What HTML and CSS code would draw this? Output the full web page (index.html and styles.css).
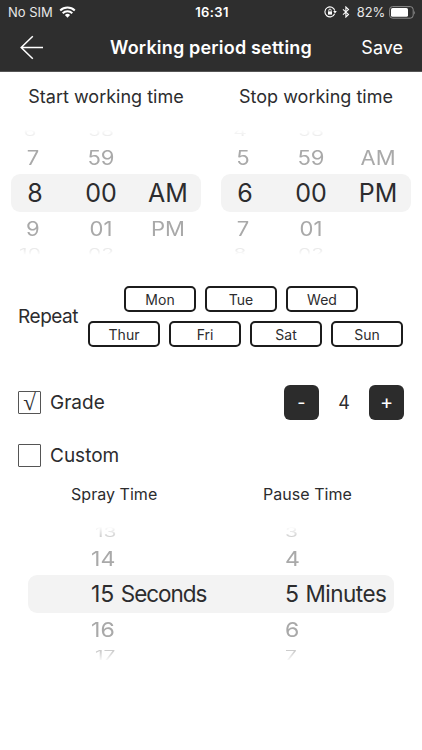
FILE: index.html
```html
<!DOCTYPE html>
<html lang="en">
<head>
<meta charset="utf-8">
<title>Working period setting</title>
<link rel="stylesheet" href="styles.css">
</head>
<body>
<header class="top">
  <div class="status">
    <div class="carrier">
      <span>No SIM</span>
      <svg class="wifi" width="17" height="12" viewBox="0 0 17 12" fill="none" stroke="#fff" stroke-width="2"><path d="M1.2 4.5a10.3 10.3 0 0 1 14.6 0M3.7 7.2a6.8 6.8 0 0 1 9.6 0"/><path d="M5.9 9.1a3.7 3.7 0 0 1 5.2 0L8.5 11.8z" fill="#fff" stroke="none"/></svg>
    </div>
    <div class="clock">16:31</div>
    <div class="indicators">
      <svg class="lock" width="13" height="12" viewBox="0 0 13 12" fill="none" stroke="#fff"><path d="M10.6 7.7A5 5 0 1 1 10.8 4.7" stroke-width="1.1"/><path d="M9.2 5h3.6L11 7.5z" fill="#fff" stroke="none"/><path d="M4 5.4h4v3.2H4z" fill="#fff" stroke="none"/><path d="M4.8 5.5V4.3a1.2 1.2 0 0 1 2.4 0v1.2" stroke-width=".9"/></svg>
      <svg class="bt" width="8" height="12" viewBox="0 0 8 12" fill="none" stroke="#fff" stroke-width="1.1"><path d="M1 3.3 6.5 8.4 3.9 11V1l2.6 2.6L1 8.7"/></svg>
      <span class="percent">82%</span>
      <svg class="battery" width="27" height="13" viewBox="0 0 27 13"><rect x=".6" y=".6" width="23.6" height="11.6" rx="3" fill="none" stroke="#8c8c8c" stroke-width="1"/><rect x="2" y="2" width="17" height="8.8" rx="1.6" fill="#fff"/><path d="M25.2 4.4q1.5 2 0 4z" fill="#8c8c8c"/></svg>
    </div>
  </div>
  <nav class="nav">
    <svg class="back" width="24" height="26" viewBox="0 0 24 26" fill="none" stroke="#fff" stroke-width="1.5"><path d="M24 12.5H2M13.8 1.2 2.2 12.5 13.8 23.8"/></svg>
    <h1>Working period setting</h1>
    <span class="save">Save</span>
  </nav>
</header>
<main>
  <section class="times">
    <div class="time">
      <h2 class="start">Start working time</h2>
      <div class="wheel">
        <div class="edge first"><span>6</span><span>58</span><span></span></div>
        <div class="near"><span>7</span><span>59</span><span></span></div>
        <div class="chosen"><span>8</span><span>00</span><span>AM</span></div>
        <div class="near"><span>9</span><span>01</span><span>PM</span></div>
        <div class="edge last"><span>10</span><span>02</span><span></span></div>
      </div>
    </div>
    <div class="time">
      <h2 class="stop">Stop working time</h2>
      <div class="wheel">
        <div class="edge first"><span>4</span><span>58</span><span></span></div>
        <div class="near"><span>5</span><span>59</span><span>AM</span></div>
        <div class="chosen"><span>6</span><span>00</span><span>PM</span></div>
        <div class="near"><span>7</span><span>01</span><span></span></div>
        <div class="edge last"><span>8</span><span>02</span><span></span></div>
      </div>
    </div>
  </section>
  <section class="repeat">
    <span class="label">Repeat</span>
    <div class="days">
      <div class="week upper"><button>Mon</button><button>Tue</button><button>Wed</button></div>
      <div class="week"><button>Thur</button><button>Fri</button><button>Sat</button><button>Sun</button></div>
    </div>
  </section>
  <section class="option grade">
    <span class="box">√</span><span class="label">Grade</span>
    <div class="stepper"><button>-</button><span>4</span><button class="plus">+</button></div>
  </section>
  <section class="option custom"><span class="box"></span><span class="label">Custom</span></section>
  <section class="durations">
    <div class="heads"><h3 class="spray">Spray Time</h3><h3 class="pause">Pause Time</h3></div>
    <div class="wheel wide">
      <div class="edge first"><span>13</span><span>3</span></div>
      <div class="near"><span>14</span><span>4</span></div>
      <div class="chosen"><span>15 <b class="sec">Seconds</b></span><span>5 <b class="min">Minutes</b></span></div>
      <div class="near"><span>16</span><span>6</span></div>
      <div class="edge last"><span>17</span><span>7</span></div>
    </div>
  </section>
</main>
</body>
</html>
```
FILE: styles.css
```css
* { box-sizing: border-box; }
body { margin: 0; width: 422px; height: 750px; overflow: hidden; background: #fff; color: #2c2c2e; font-family: Inter, "Liberation Sans", sans-serif; }
h1, h2, h3 { margin: 0; font-weight: 400; }
button { font: inherit; color: inherit; padding: 0; }
svg { display: block; flex: none; }
span, h1, h2, h3 { white-space: nowrap; }

.top { height: 72px; background: #2e2e2e; color: #fff; border-bottom: 1px solid #555; }
.status { height: 24px; display: grid; grid-template-columns: 1fr auto 1fr; align-items: center; padding: 0 6px 0 8px; font-size: 13px; }
.carrier, .indicators { display: flex; align-items: center; color: #e8e8e8; }
.carrier { gap: 6px; }
.clock { font-weight: 600; letter-spacing: .4px; }
.indicators { justify-content: flex-end; }
.bt { margin: 0 7px 0 5px; }
.percent { margin-right: 4px; letter-spacing: -.2px; }
.nav { height: 47px; display: grid; grid-template-columns: 90px 1fr 90px; align-items: center; padding: 0 19px; }
.nav h1 { font-size: 18px; font-weight: 600; letter-spacing: .18px; text-align: center; }
.save { text-align: right; font-size: 18px; }

.times { display: flex; justify-content: space-between; padding: 0 11px; }
.time { width: 190px; }
.times h2 { height: 50px; line-height: 49px; font-size: 18px; text-align: center; }
.wheel { margin-top: 2px; }
.wheel > div { display: grid; grid-template-columns: 48px 84px 50px; text-align: center; }
.wheel .edge { height: 16px; font-size: 21px; line-height: 16px; }
.edge span { color: #aaa; transform: scaleY(.6); }
.times .edge { opacity: .25; }
.times .edge span:first-child { padding-right: 10px; }
.times .near span:first-child { padding-right: 4px; }
.times .edge.first { -webkit-mask-image: linear-gradient(transparent 35%, #000 80%); }
.times .edge.last { -webkit-mask-image: linear-gradient(#000 20%, transparent 55%); }
.near { height: 34px; line-height: 35px; font-size: 21px; color: #a9a9a9; }
.near span { transform: scale(1.05, .93); }
.chosen { height: 38px; line-height: 38px; font-size: 25px; background: #f3f3f3; border-radius: 9px; }
.near:nth-child(2) { line-height: 36px; }
.near:nth-child(4) { line-height: 33px; }

.repeat { display: flex; align-items: center; height: 61px; margin-top: 24px; padding: 0 18px; }
.label { font-size: 19px; }
.repeat .label { width: 70px; letter-spacing: -.45px; }
.days { display: flex; flex-direction: column; gap: 9px; }
.week { display: flex; gap: 9px; }
.upper { padding-left: 36px; }
.week button { width: 72px; height: 26px; border: 2px solid #1c1c1c; border-radius: 5px; background: #fff; font-size: 14px; }

.option { display: flex; align-items: center; padding: 0 18px; height: 36px; }
.grade { margin-top: 37px; }
.custom { margin-top: 17px; }
.box { width: 23px; height: 23px; border: 1px solid #555; border-radius: 1px; font: 23px/22px "Liberation Serif", serif; text-align: center; margin-right: 9px; }
.stepper { display: flex; align-items: center; margin-left: auto; font-size: 18px; }
.stepper button { width: 35px; height: 35px; border: 0; border-radius: 6px; background: #2c2c2c; color: #fff; }
.stepper .plus { font-size: 20px; }
.stepper span { width: 50px; text-align: center; }

.heads { display: flex; height: 41px; line-height: 42px; padding-left: 71px; }
.heads h3 { font-size: 16px; letter-spacing: .04px; }
.spray { width: 192px; }
.wide { margin: 11px 28px 0; }
.wide > div { grid-template-columns: 194px 1fr; text-align: left; padding-left: 63px; }
.wide span { transform-origin: left center; }
.wide .near span { transform: scale(1.1, .97); }
.wide b { font-weight: 400; font-size: 22.5px; }
.wide .sec { letter-spacing: -1.05px; }
.wide .min { letter-spacing: -.5px; }
.wide .chosen { font-size: 23px; }
.wide .edge span { color: #ccc; }
.wide .edge span:first-child { padding-left: 4px; }
.wide .last { transform: translateY(1px); }
.wide .first { -webkit-mask-image: linear-gradient(transparent 10%, #000 80%); }
.wide .last { -webkit-mask-image: linear-gradient(#000 20%, transparent 85%); }
```
